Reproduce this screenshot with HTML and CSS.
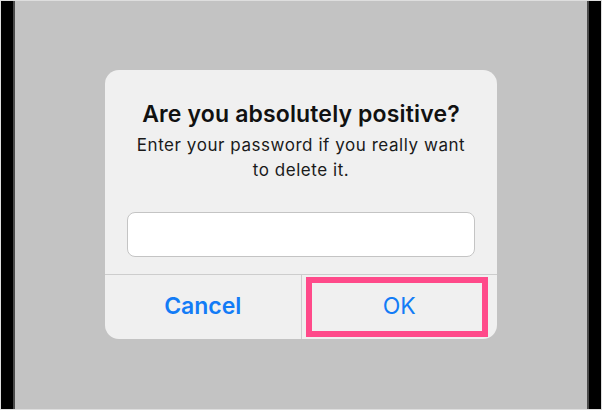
FILE: index.html
```html
<!DOCTYPE html>
<html lang="en">
<head>
<meta charset="utf-8">
<title>Alert</title>
<link rel="stylesheet" href="styles.css">
</head>
<body>
<div class="frame">
  <div class="side side-left"></div>
  <div class="screen">
    <div class="dialog">
      <div class="body">
        <h1 class="title">Are you absolutely positive?</h1>
        <p class="message">Enter your password if you really want to delete it.</p>
        <div class="field"></div>
      </div>
      <div class="actions">
        <div class="action cancel">Cancel</div>
        <div class="action ok">OK<span class="highlight"></span></div>
      </div>
    </div>
  </div>
  <div class="side side-right"></div>
</div>
</body>
</html>
```

FILE: styles.css
```css
* { box-sizing: border-box; }
html, body { margin: 0; padding: 0; background: #dcdcdc; }
body { width: 602px; height: 410px; overflow: hidden; font-family: Inter, "Liberation Sans", sans-serif; }

.frame {
  width: 602px;
  height: 410px;
  border: 1px solid #dedede;
  display: flex;
}
.side { width: 14px; background: #000; }
.side-left { border-right: 2px solid #4a4a4a; }
.side-right { border-left: 2px solid #4a4a4a; }

.screen {
  flex: 1;
  background: #c3c3c3;
  padding: 69px 0 0 90px;
}

.dialog {
  width: 392px;
  height: 269px;
  background: #f0f0f0;
  border-radius: 14px;
  display: flex;
  flex-direction: column;
  overflow: hidden;
}

.body {
  padding: 30px 20px 17px;
  text-align: center;
}

.title {
  margin: 0;
  font-size: 23px;
  line-height: 28px;
  font-weight: 600;
  color: #111;
  letter-spacing: 0.15px;
}

.message {
  margin: 5px 10px 0;
  font-size: 17px;
  line-height: 25px;
  font-weight: 400;
  color: #1a1a1a;
  letter-spacing: 0.55px;
}

.field {
  margin: 29px 2px 0;
  height: 45px;
  background: #fff;
  border: 1px solid #c4c4c4;
  border-radius: 8px;
}

.actions {
  flex: 1;
  display: flex;
  border-top: 1px solid #cdcdcd;
}

.action {
  flex: 1;
  display: flex;
  align-items: center;
  justify-content: center;
  font-size: 23px;
  color: #137cf6;
  padding-bottom: 2px;
}
.cancel { font-weight: 600; border-right: 1px solid #cdcdcd; }
.ok { font-weight: 400; position: relative; }

.highlight {
  position: absolute;
  left: 4px;
  top: 2px;
  right: 9px;
  bottom: 2px;
  border: 6px solid #ff4a8a;
}
```
